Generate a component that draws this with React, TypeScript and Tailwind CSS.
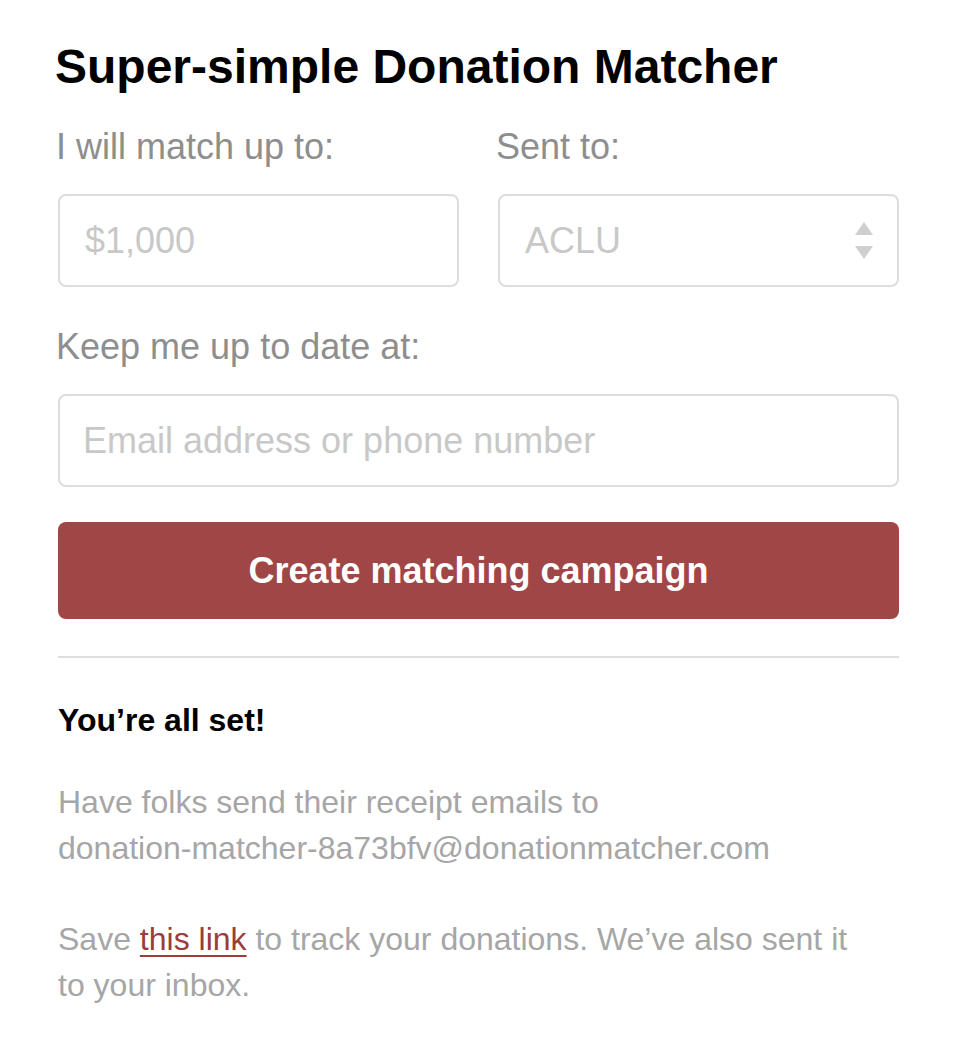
import React from "react";

export default function App() {
  return (
    <div
      className="min-h-[1058px] w-[962px] bg-white pt-[39px]"
      style={{ fontFamily: '"Liberation Sans", Arial, Helvetica, sans-serif' }}
    >
      <div className="ml-[58px] w-[841px]">
        <h1 className="-ml-[3px] text-[48px] leading-[56px] font-bold text-black">
          Super-simple Donation Matcher
        </h1>

        <div className="mt-[30px] grid grid-cols-2 gap-x-[39px]">
          <div>
            <label className="-ml-[2px] block text-[36px] leading-[44px] text-[#8e8e8e]">
              I will match up to:
            </label>
            <input
              className="mt-[25px] block h-[93px] w-full rounded-[8px] border-2 border-[#dddddd] bg-white px-[25px] text-[36px] text-[#555] outline-none placeholder:text-[#c8c8c8]"
              placeholder="$1,000"
            />
          </div>
          <div>
            <label className="-ml-[2px] block text-[36px] leading-[44px] text-[#8e8e8e]">
              Sent to:
            </label>
            <div className="mt-[25px] flex h-[93px] w-full items-center justify-between rounded-[8px] border-2 border-[#dddddd] bg-white pl-[25px] pr-[24px]">
              <span className="text-[36px] text-[#c8c8c8]">ACLU</span>
              <svg width="18" height="38" viewBox="0 0 18 38" className="block">
                <polygon points="9,0 18,13 0,13" fill="#cfcfcf" />
                <polygon points="0,24 18,24 9,37" fill="#cfcfcf" />
              </svg>
            </div>
          </div>
        </div>

        <label className="-ml-[2px] mt-[38px] block text-[36px] leading-[44px] text-[#8e8e8e]">
          Keep me up to date at:
        </label>
        <input
          className="mt-[25px] block h-[93px] w-full rounded-[8px] border-2 border-[#dddddd] bg-white px-[23px] text-[36px] text-[#555] outline-none placeholder:text-[#c8c8c8]"
          placeholder="Email address or phone number"
        />

        <button className="mt-[35px] flex h-[97px] w-full items-center justify-center rounded-[8px] bg-[#a14646] text-[36px] font-bold text-white">
          Create matching campaign
        </button>

        <div className="mt-[37px] h-[2px] w-full bg-[#dedede]" />

        <h2 className="mt-[42px] text-[32px] leading-[40px] font-bold text-black">
          You’re all set!
        </h2>

        <p className="mt-[39px] text-[32px] leading-[46px] text-[#a6a6a6]">
          Have folks send their receipt emails to
          <br />
          donation-matcher-8a73bfv@donationmatcher.com
        </p>

        <p className="mt-[45px] w-[800px] text-[32px] leading-[46px] text-[#a6a6a6]">
          Save{" "}
          <a href="#" className="text-[#9c3c3c] underline decoration-2 underline-offset-[5px]">
            this link
          </a>{" "}
          to track your donations. We’ve also sent it to your inbox.
        </p>
      </div>
    </div>
  );
}
